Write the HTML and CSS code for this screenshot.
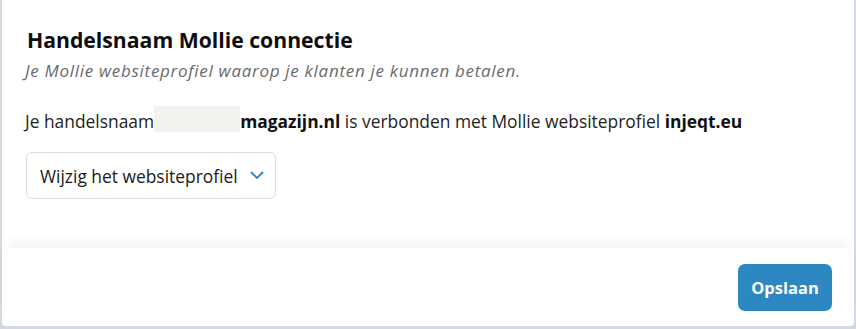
FILE: index.html
```html
<!DOCTYPE html>
<html lang="nl">
<head>
    <meta charset="UTF-8">
    <meta name="viewport" content="width=device-width, initial-scale=1.0">
    <title>Handelsnaam Mollie connectie</title>
    <link rel="stylesheet" href="styles.css">
</head>
<body>
    <div class="modal">
        <div class="modal-body">
            <section class="card">
                <h2>Handelsnaam Mollie connectie</h2>
                <p class="hint">Je Mollie websiteprofiel waarop je klanten je kunnen betalen.</p>
                <p class="status">Je handelsnaam<span class="redacted"></span><strong>magazijn.nl</strong> is verbonden met Mollie websiteprofiel <strong>injeqt.eu</strong></p>
                <button class="select" type="button">
                    <span>Wijzig het websiteprofiel</span>
                    <svg width="14" height="9" viewBox="0 0 14 9">
                        <path d="M1.5 1.5 L7 7 L12.5 1.5" fill="none" stroke="#2d88c2" stroke-width="1.8" stroke-linecap="round" stroke-linejoin="round"/>
                    </svg>
                </button>
            </section>
        </div>
        <footer class="modal-footer">
            <button class="btn-primary" type="button">Opslaan</button>
        </footer>
    </div>
</body>
</html>
```

FILE: styles.css
```css
body {
    margin: 0;
    background: #d4d8e3;
    font-family: 'Open Sans', 'Liberation Sans', sans-serif;
    color: #1c1c1c;
    height: 329px;
    overflow: hidden;
}
.modal {
    margin: 0 2px;
    height: 326px;
    background: #fff;
    border-radius: 0 0 4px 4px;
    display: flex;
    flex-direction: column;
}
.modal-body {
    flex: 1;
}
.card {
    height: 222px;
    box-sizing: border-box;
    padding: 26px 25px 0;
}
h2 {
    margin: 0;
    font-size: 21.2px;
    font-weight: 700;
    color: #0d0d0d;
    line-height: 28px;
}
.hint {
    margin: 5px 0 0 -2px;
    font-size: 17px;
    letter-spacing: 0.7px;
    font-style: italic;
    color: #6b6b6b;
    line-height: 24px;
}
.status {
    margin: 25px 0 0 -2px;
    font-size: 17.4px;
    line-height: 26px;
    color: #1e1e1e;
    display: flex;
    align-items: center;
    white-space: pre;
}
.status strong {
    color: #111;
}
.redacted {
    display: inline-block;
    width: 86px;
    height: 26px;
    background: #f3f2ee;
    transform: translateY(-2px);
}
.select {
    margin: 18px 0 0 -1px;
    width: 250px;
    height: 47px;
    box-sizing: border-box;
    background: #fff;
    border: 1px solid #dcdcdc;
    border-radius: 6px;
    padding: 0 10px 0 13px;
    display: flex;
    align-items: center;
    justify-content: space-between;
    font-family: inherit;
    font-size: 17.4px;
    color: #1a1a1a;
}
.select svg {
    margin-right: 1px;
}
.modal-footer {
    height: 78px;
    display: flex;
    justify-content: flex-end;
    align-items: center;
    padding-right: 22px;
    box-shadow: 0 -10px 14px -6px rgba(0, 0, 0, 0.06);
}
.btn-primary {
    width: 94px;
    height: 47px;
    background: #2d88c2;
    border: none;
    border-radius: 7px;
    color: #fff;
    font-family: inherit;
    font-size: 16.5px;
    font-weight: 700;
}
```
